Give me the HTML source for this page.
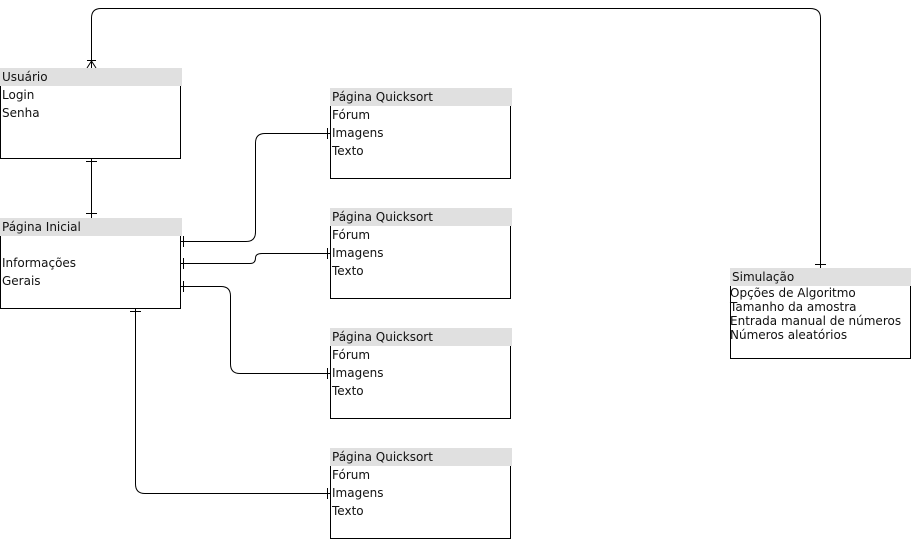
<!DOCTYPE html>
<html><head><meta charset="utf-8"><style>
html,body{margin:0;padding:0;background:#fff;width:911px;height:539px;overflow:hidden}
svg text{font-family:"DejaVu Sans","Liberation Sans",sans-serif;font-size:12px;fill:#111}
</style></head><body>
<svg width="911" height="539" viewBox="0 0 911 539" xmlns="http://www.w3.org/2000/svg">
<g fill="none" stroke="#000" stroke-width="1">
<path d="M91.5 68V18Q91.5 8.5 101 8.5H810Q820.5 8.5 820.5 18V268"/>
<path d="M91.5 61L87 68M91.5 61L96 68M87 60.5H96M815 264.5H826"/>
<path d="M91.5 158V218M86 161.5H97M86 213.5H97"/>
<path d="M181 241.5H246Q255.5 241.5 255.5 232V143Q255.5 133.5 265 133.5H330"/>
<path d="M181 263.5H250Q255.5 263.5 255.5 258Q255.5 253.5 262 253.5H330"/>
<path d="M181 286.5H221Q230.5 286.5 230.5 296V364Q230.5 373.5 240 373.5H330"/>
<path d="M135.5 308V484Q135.5 493.5 145 493.5H330"/>
<path d="M183.5 236V247M183.5 258V269M183.5 281V292M130 311.5H141M327.5 128V139M327.5 248V259M327.5 368V379M327.5 488V499"/>
<path d="M0.5 86V158.5H180.5V86"/>
<path d="M0.5 236V308.5H180.5V236"/>
<path d="M330.5 106V178.5H510.5V106"/>
<path d="M330.5 226V298.5H510.5V226"/>
<path d="M330.5 346V418.5H510.5V346"/>
<path d="M330.5 466V538.5H510.5V466"/>
<path d="M730.5 286V358.5H910.5V286"/>
</g>
<g fill="#e0e0e0">
<rect x="0" y="68" width="182" height="18"/>
<rect x="0" y="218" width="182" height="18"/>
<rect x="330" y="88" width="182" height="18"/>
<rect x="330" y="208" width="182" height="18"/>
<rect x="330" y="328" width="182" height="18"/>
<rect x="330" y="448" width="182" height="18"/>
<rect x="730" y="268" width="181" height="18"/>
</g>
<text x="2" y="81">Usuário</text>
<text x="2" y="99">Login</text>
<text x="2" y="117">Senha</text>
<text x="2" y="231">Página Inicial</text>
<text x="2" y="267">Informações</text>
<text x="2" y="285">Gerais</text>
<g>
<text x="332" y="101">Página Quicksort</text><text x="332" y="119">Fórum</text><text x="332" y="137">Imagens</text><text x="332" y="155">Texto</text>
<text x="332" y="221">Página Quicksort</text><text x="332" y="239">Fórum</text><text x="332" y="257">Imagens</text><text x="332" y="275">Texto</text>
<text x="332" y="341">Página Quicksort</text><text x="332" y="359">Fórum</text><text x="332" y="377">Imagens</text><text x="332" y="395">Texto</text>
<text x="332" y="461">Página Quicksort</text><text x="332" y="479">Fórum</text><text x="332" y="497">Imagens</text><text x="332" y="515">Texto</text>
</g>
<text x="732" y="281">Simulação</text>
<text x="730" y="297">Opções de Algoritmo</text>
<text x="730" y="311">Tamanho da amostra</text>
<text x="730" y="325">Entrada manual de números</text>
<text x="730" y="339">Números aleatórios</text>
</svg>
</body></html>
